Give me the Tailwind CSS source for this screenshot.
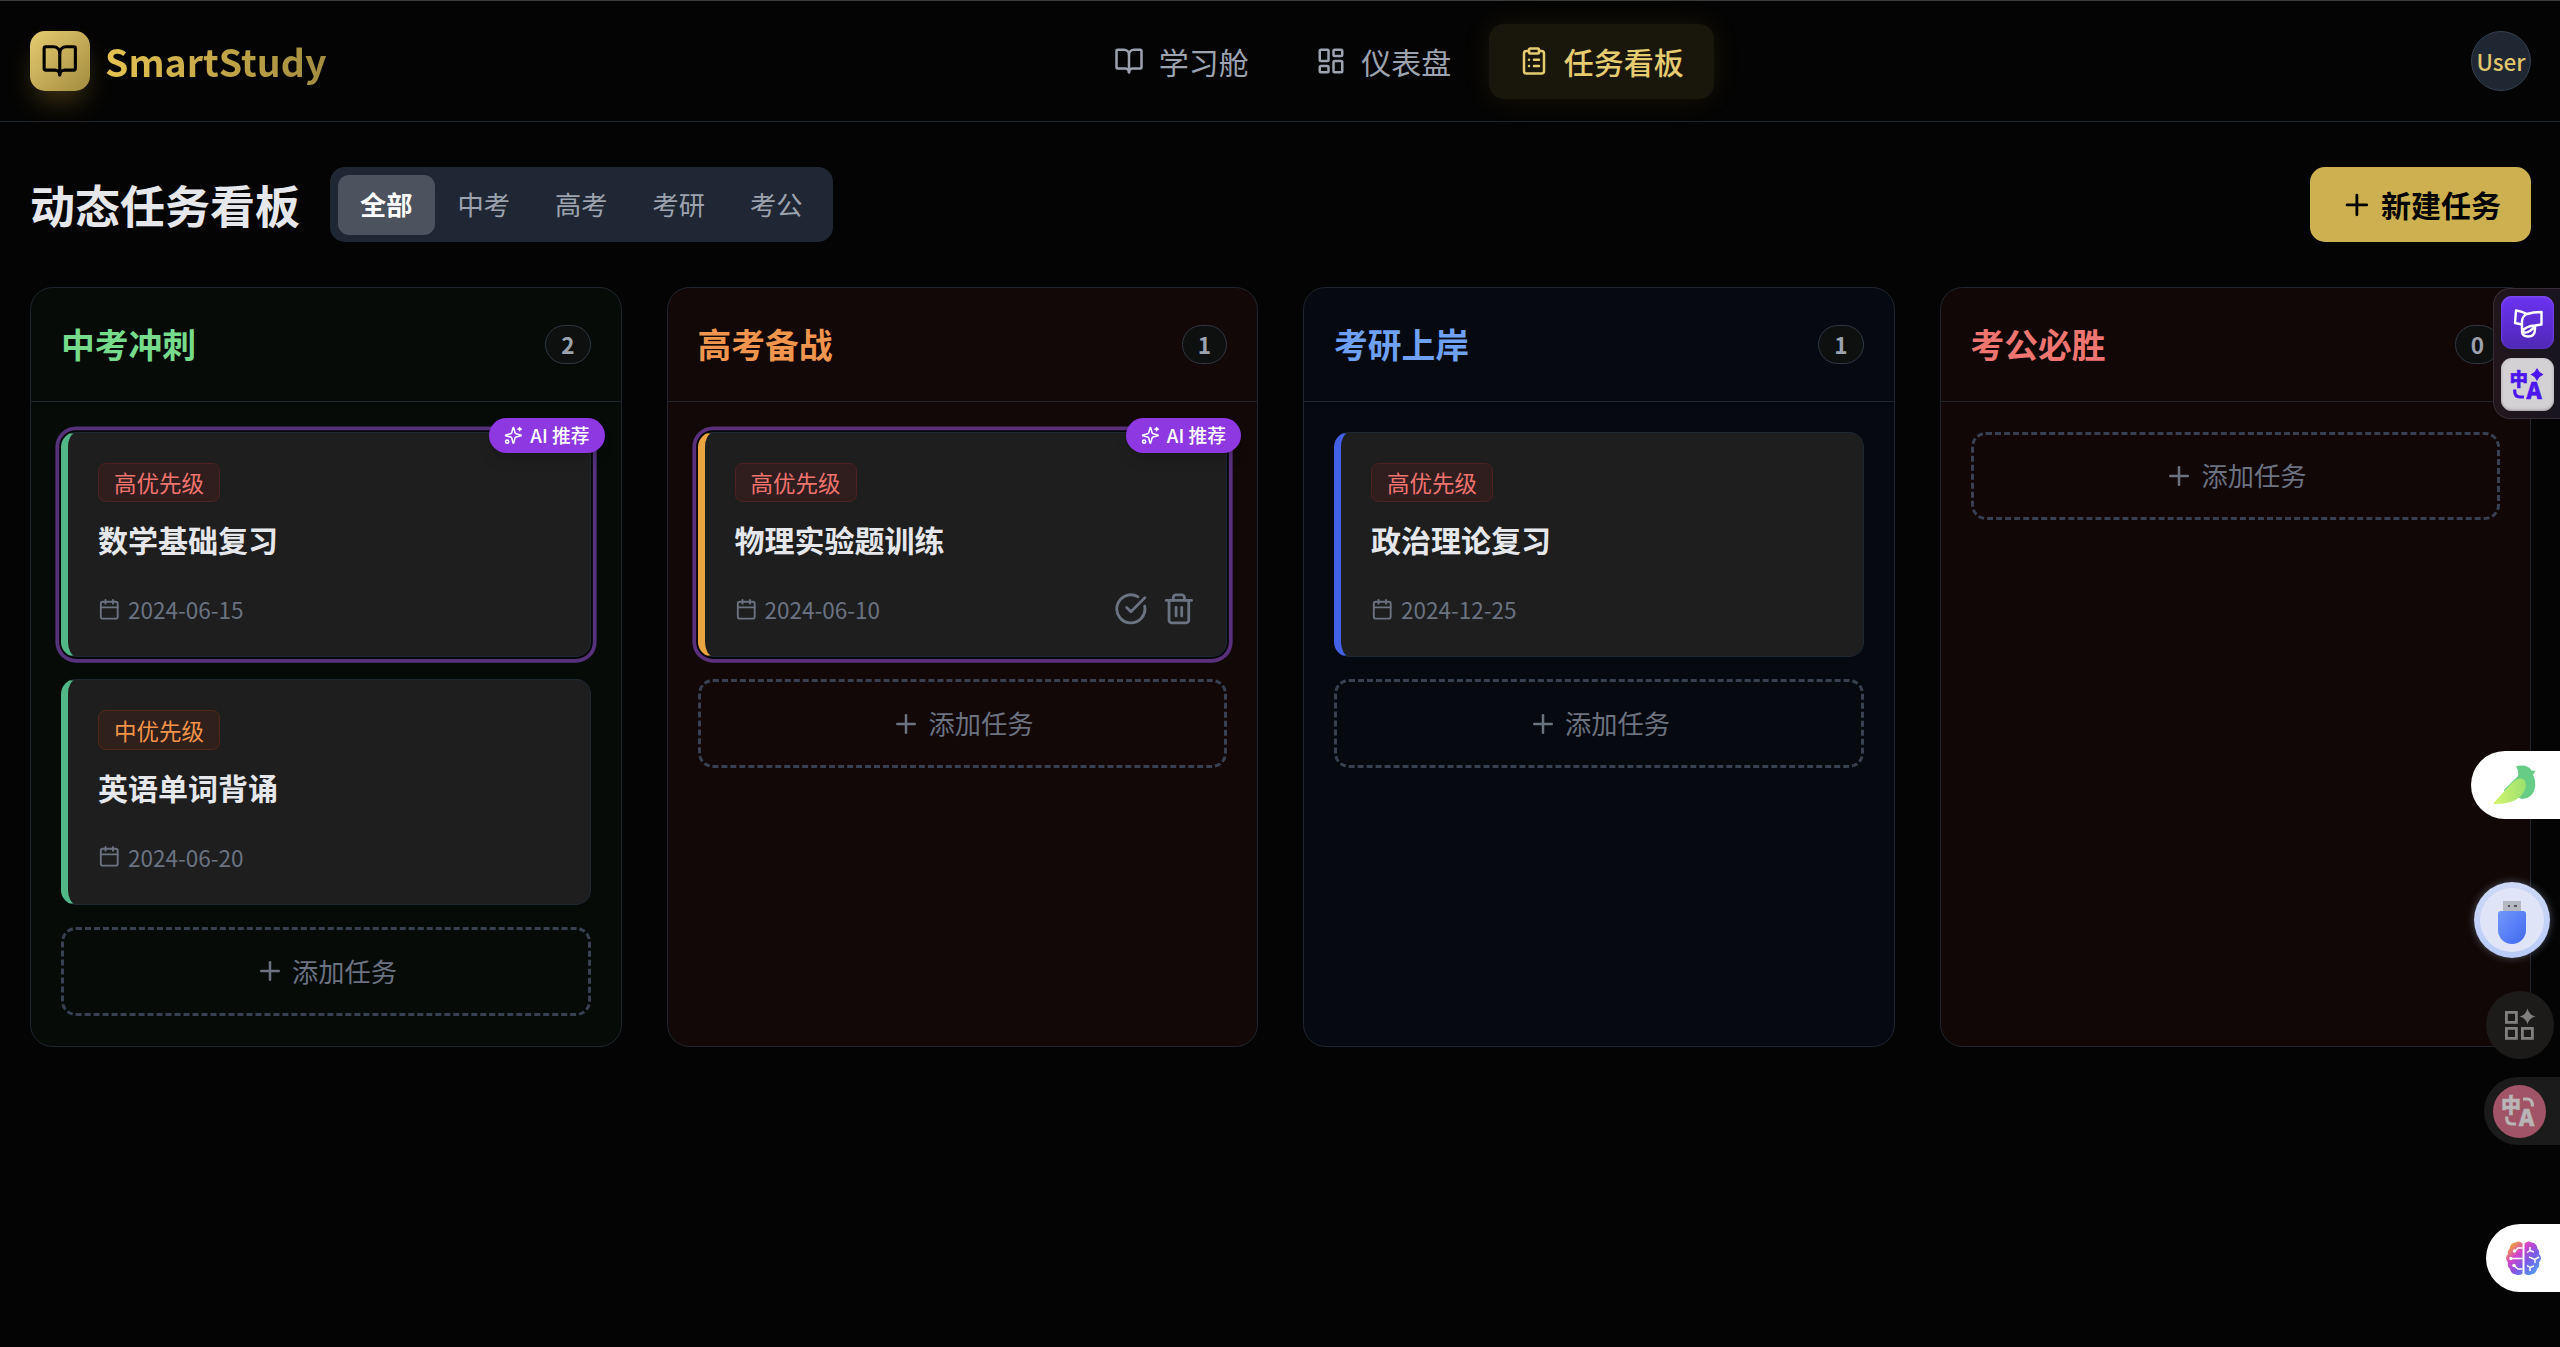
<!DOCTYPE html>
<html lang="zh-CN" class="text-[30px]">
<head>
    <meta charset="UTF-8">
    <meta name="viewport" content="width=device-width, initial-scale=1.0">
    <title>SmartStudy - 动态任务看板</title>
    <script src="https://cdn.jsdelivr.net/npm/@tailwindcss/browser@4"></script>
</head>
<body class="relative h-[1347px] overflow-hidden bg-[#040404] text-gray-200 font-['Noto_Sans_CJK_SC',sans-serif] border-t border-[#3c3c3c]">

    <!-- Icon sprite -->
    <svg class="hidden">
        <symbol id="book" viewBox="0 0 24 24"><path d="M12 7v14"/><path d="M3 18a1 1 0 0 1-1-1V4a1 1 0 0 1 1-1h5a4 4 0 0 1 4 4 4 4 0 0 1 4-4h5a1 1 0 0 1 1 1v13a1 1 0 0 1-1 1h-6a3 3 0 0 0-3 3 3 3 0 0 0-3-3z"/></symbol>
        <symbol id="dashboard" viewBox="0 0 24 24"><rect width="7" height="9" x="3" y="3" rx="1"/><rect width="7" height="5" x="14" y="3" rx="1"/><rect width="7" height="9" x="14" y="12" rx="1"/><rect width="7" height="5" x="3" y="16" rx="1"/></symbol>
        <symbol id="clipboard" viewBox="0 0 24 24"><rect width="8" height="4" x="8" y="2" rx="1"/><path d="M16 4h2a2 2 0 0 1 2 2v14a2 2 0 0 1-2 2H6a2 2 0 0 1-2-2V6a2 2 0 0 1 2-2h2"/><path d="M12 11h4"/><path d="M12 16h4"/><path d="M8 11h.01"/><path d="M8 16h.01"/></symbol>
        <symbol id="plus" viewBox="0 0 24 24"><path d="M5 12h14"/><path d="M12 5v14"/></symbol>
        <symbol id="calendar" viewBox="0 0 24 24"><path d="M8 2v4"/><path d="M16 2v4"/><rect width="18" height="18" x="3" y="4" rx="2"/><path d="M3 10h18"/></symbol>
        <symbol id="check" viewBox="0 0 24 24"><path d="M21.801 10A10 10 0 1 1 17 3.335"/><path d="m9 11 3 3L22 4"/></symbol>
        <symbol id="trash" viewBox="0 0 24 24"><path d="M3 6h18"/><path d="M19 6v14a2 2 0 0 1-2 2H7a2 2 0 0 1-2-2V6"/><path d="M8 6V4a2 2 0 0 1 2-2h4a2 2 0 0 1 2 2v2"/><path d="M10 11v6"/><path d="M14 11v6"/></symbol>
        <symbol id="sparkles" viewBox="0 0 24 24"><path d="M9.937 15.5A2 2 0 0 0 8.5 14.063l-6.135-1.582a.5.5 0 0 1 0-.962L8.5 9.936A2 2 0 0 0 9.937 8.5l1.582-6.135a.5.5 0 0 1 .963 0L14.063 8.5A2 2 0 0 0 15.5 9.937l6.135 1.581a.5.5 0 0 1 0 .964L15.5 14.063a2 2 0 0 0-1.437 1.437l-1.582 6.135a.5.5 0 0 1-.963 0z"/><path d="M20 2v4"/><path d="M22 4h-4"/><circle cx="4" cy="20" r="2"/></symbol>
    </svg>

    <!-- Header -->
    <header class="flex items-center justify-between pl-4 pr-[29px] py-3 border-b border-[#1e252e]">
        <div class="flex items-center gap-2">
            <div class="flex items-center justify-center size-8 rounded-lg bg-linear-to-br from-[#e6cc70] to-[#a38c40] text-black shadow-[0_15px_28px_-6px_rgba(212,175,55,0.3)]">
                <svg class="size-5 fill-none stroke-current stroke-2 [stroke-linecap:round] [stroke-linejoin:round]"><use href="#book"/></svg>
            </div>
            <h1 class="text-xl font-bold bg-linear-to-r from-[#e6c350] to-[#a38c40] bg-clip-text text-transparent">SmartStudy</h1>
        </div>

        <nav class="flex items-center gap-1">
            <a class="flex items-center gap-2 px-4 py-2 text-[#9ca3af]">
                <svg class="size-4 fill-none stroke-current stroke-2 [stroke-linecap:round] [stroke-linejoin:round]"><use href="#book"/></svg>
                <span>学习舱</span>
            </a>
            <a class="flex items-center gap-2 px-4 py-2 text-[#9ca3af]">
                <svg class="size-4 fill-none stroke-current stroke-2 [stroke-linecap:round] [stroke-linejoin:round]"><use href="#dashboard"/></svg>
                <span>仪表盘</span>
            </a>
            <a class="flex items-center gap-2 px-4 py-2 rounded-lg bg-[#19170c] text-[#e6cc70] font-medium shadow-[0_0_28px_rgba(212,175,55,0.1)]">
                <svg class="size-4 fill-none stroke-current stroke-2 [stroke-linecap:round] [stroke-linejoin:round]"><use href="#clipboard"/></svg>
                <span>任务看板</span>
            </a>
        </nav>

        <div class="flex items-center justify-center size-8 rounded-full bg-[#1f2733] border border-[#374151] text-xs font-medium text-[#e0c66c]">User</div>
    </header>

    <main class="pl-4 pr-[29px] py-6">
        <!-- Title and filters -->
        <div class="flex items-center justify-between mb-6">
            <div class="flex items-center gap-4">
                <h2 class="text-2xl font-bold">动态任务看板</h2>
                <div class="flex p-1 rounded-lg bg-[#202734] text-sm text-[#9ca3af]">
                    <button class="px-3 py-1.5 rounded-md bg-[#4c525e] text-white font-bold">全部</button>
                    <button class="px-3 py-1.5">中考</button>
                    <button class="px-3 py-1.5">高考</button>
                    <button class="px-3 py-1.5">考研</button>
                    <button class="px-3 py-1.5">考公</button>
                </div>
            </div>
            <button class="flex items-center gap-1 px-4 py-2 rounded-lg bg-[#cdb04f] text-black font-bold">
                <svg class="size-4.5 fill-none stroke-current stroke-2 [stroke-linecap:round] [stroke-linejoin:round]"><use href="#plus"/></svg>
                新建任务
            </button>
        </div>

        <!-- Board -->
        <div class="grid grid-cols-4 gap-6">

            <!-- 中考 -->
            <section class="rounded-xl border border-[#1f2630] bg-[#070b08]">
                <div class="flex items-center justify-between p-4 border-b border-[#1f2630]">
                    <h3 class="text-lg font-bold text-[#76db8b]">中考冲刺</h3>
                    <span class="px-2 py-0.5 rounded-full border border-[#303844] bg-[#0e0f0f] text-xs font-bold text-[#9ca3af]">2</span>
                </div>
                <div class="flex flex-col gap-3 p-4">
                    <div class="relative p-4 rounded-lg border border-[#1f2733] border-l-[7px] border-l-[#52b788] bg-[#1e1e1e] ring-[3.75px] ring-[#56317c] ring-offset-[1.875px] ring-offset-[#070709]">
                        <span class="absolute -top-2 -right-2 flex items-center gap-1 px-2 py-0.5 rounded-full bg-[#8d38e0] text-[18.75px]/[28px] font-medium text-white shadow-lg">
                            <svg class="size-2.5 fill-none stroke-current stroke-2 [stroke-linecap:round] [stroke-linejoin:round]"><use href="#sparkles"/></svg>
                            AI 推荐
                        </span>
                        <div class="flex mb-2"><span class="px-2 py-0.5 rounded-sm border border-[#4e2122] bg-[#301d1e] text-xs text-[#ee736f]">高优先级</span></div>
                        <h4 class="font-bold">数学基础复习</h4>
                        <div class="flex items-center justify-between h-4.5 mt-4 text-[#6b7280]">
                            <div class="flex items-center gap-1 text-xs">
                                <svg class="size-3 fill-none stroke-current stroke-2 [stroke-linecap:round] [stroke-linejoin:round]"><use href="#calendar"/></svg>
                                2024-06-15
                            </div>
                        </div>
                    </div>
                    <div class="p-4 rounded-lg border border-[#1f2733] border-l-[7px] border-l-[#52b788] bg-[#1e1e1e]">
                        <div class="flex mb-2"><span class="px-2 py-0.5 rounded-sm border border-[#53281a] bg-[#2f201b] text-xs text-[#f19348]">中优先级</span></div>
                        <h4 class="font-bold">英语单词背诵</h4>
                        <div class="flex items-center justify-between h-4.5 mt-4 text-[#6b7280]">
                            <div class="flex items-center gap-1 text-xs">
                                <svg class="size-3 fill-none stroke-current stroke-2 [stroke-linecap:round] [stroke-linejoin:round]"><use href="#calendar"/></svg>
                                2024-06-20
                            </div>
                        </div>
                    </div>
                    <button class="flex items-center justify-center gap-1 py-3 rounded-lg border-[3px] border-dashed border-[#374151] text-sm text-[#6b7280]">
                        <svg class="size-4 fill-none stroke-current stroke-2 [stroke-linecap:round] [stroke-linejoin:round]"><use href="#plus"/></svg>
                        添加任务
                    </button>
                </div>
            </section>

            <!-- 高考 -->
            <section class="rounded-xl border border-[#1f2630] bg-[#110807]">
                <div class="flex items-center justify-between p-4 border-b border-[#1f2630]">
                    <h3 class="text-lg font-bold text-[#f0954d]">高考备战</h3>
                    <span class="px-2 py-0.5 rounded-full border border-[#303844] bg-[#0e0f0f] text-xs font-bold text-[#9ca3af]">1</span>
                </div>
                <div class="flex flex-col gap-3 p-4">
                    <div class="relative p-4 rounded-lg border border-[#1f2733] border-l-[7px] border-l-[#e9a540] bg-[#1e1e1e] ring-[3.75px] ring-[#5a307d] ring-offset-[1.875px] ring-offset-[#070709]">
                        <span class="absolute -top-2 -right-2 flex items-center gap-1 px-2 py-0.5 rounded-full bg-[#8d38e0] text-[18.75px]/[28px] font-medium text-white shadow-lg">
                            <svg class="size-2.5 fill-none stroke-current stroke-2 [stroke-linecap:round] [stroke-linejoin:round]"><use href="#sparkles"/></svg>
                            AI 推荐
                        </span>
                        <div class="flex mb-2"><span class="px-2 py-0.5 rounded-sm border border-[#4e2122] bg-[#301d1e] text-xs text-[#ee736f]">高优先级</span></div>
                        <h4 class="font-bold">物理实验题训练</h4>
                        <div class="flex items-center justify-between h-4.5 mt-4 text-[#6b7280]">
                            <div class="flex items-center gap-1 text-xs">
                                <svg class="size-3 fill-none stroke-current stroke-2 [stroke-linecap:round] [stroke-linejoin:round]"><use href="#calendar"/></svg>
                                2024-06-10
                            </div>
                            <div class="flex gap-2">
                                <svg class="size-4.5 fill-none stroke-current stroke-2 [stroke-linecap:round] [stroke-linejoin:round]"><use href="#check"/></svg>
                                <svg class="size-4.5 fill-none stroke-current stroke-2 [stroke-linecap:round] [stroke-linejoin:round]"><use href="#trash"/></svg>
                            </div>
                        </div>
                    </div>
                    <button class="flex items-center justify-center gap-1 py-3 rounded-lg border-[3px] border-dashed border-[#374151] text-sm text-[#6b7280]">
                        <svg class="size-4 fill-none stroke-current stroke-2 [stroke-linecap:round] [stroke-linejoin:round]"><use href="#plus"/></svg>
                        添加任务
                    </button>
                </div>
            </section>

            <!-- 考研 -->
            <section class="rounded-xl border border-[#1f2630] bg-[#06090f]">
                <div class="flex items-center justify-between p-4 border-b border-[#1f2630]">
                    <h3 class="text-lg font-bold text-[#6ea0f4]">考研上岸</h3>
                    <span class="px-2 py-0.5 rounded-full border border-[#303844] bg-[#0e0f0f] text-xs font-bold text-[#9ca3af]">1</span>
                </div>
                <div class="flex flex-col gap-3 p-4">
                    <div class="p-4 rounded-lg border border-[#1f2733] border-l-[7px] border-l-[#4361e6] bg-[#1e1e1e]">
                        <div class="flex mb-2"><span class="px-2 py-0.5 rounded-sm border border-[#4e2122] bg-[#301d1e] text-xs text-[#ee736f]">高优先级</span></div>
                        <h4 class="font-bold">政治理论复习</h4>
                        <div class="flex items-center justify-between h-4.5 mt-4 text-[#6b7280]">
                            <div class="flex items-center gap-1 text-xs">
                                <svg class="size-3 fill-none stroke-current stroke-2 [stroke-linecap:round] [stroke-linejoin:round]"><use href="#calendar"/></svg>
                                2024-12-25
                            </div>
                        </div>
                    </div>
                    <button class="flex items-center justify-center gap-1 py-3 rounded-lg border-[3px] border-dashed border-[#374151] text-sm text-[#6b7280]">
                        <svg class="size-4 fill-none stroke-current stroke-2 [stroke-linecap:round] [stroke-linejoin:round]"><use href="#plus"/></svg>
                        添加任务
                    </button>
                </div>
            </section>

            <!-- 考公 -->
            <section class="rounded-xl border border-[#1f2630] bg-[#100706]">
                <div class="flex items-center justify-between p-4 border-b border-[#1f2630]">
                    <h3 class="text-lg font-bold text-[#ee7570]">考公必胜</h3>
                    <span class="px-2 py-0.5 rounded-full border border-[#303844] bg-[#0e0f0f] text-xs font-bold text-[#9ca3af]">0</span>
                </div>
                <div class="flex flex-col gap-3 p-4">
                    <button class="flex items-center justify-center gap-1 py-3 rounded-lg border-[3px] border-dashed border-[#374151] text-sm text-[#6b7280]">
                        <svg class="size-4 fill-none stroke-current stroke-2 [stroke-linecap:round] [stroke-linejoin:round]"><use href="#plus"/></svg>
                        添加任务
                    </button>
                </div>
            </section>
        </div>
    </main>

    <!-- Floating tools on the right edge -->
    <div class="absolute right-0 top-[287px] w-[67px] h-[131px] pl-[7px] pt-[7px] flex flex-col gap-[9px] rounded-l-[17px] border border-r-0 border-[#382d36] bg-linear-to-r from-[#21161c] to-[#18151e]">
        <div class="size-[53px] rounded-[11px] bg-linear-to-b from-[#6b32f2] to-[#4f28b6] shadow-[inset_0_1px_3px_#8656f5] flex items-center justify-center">
            <svg class="size-[32px] fill-none stroke-white stroke-[2.4] [stroke-linejoin:round]" viewBox="0 0 32 32">
                <path d="M10 17.500 3 16 4 3.500Q9 4 15 7"/>
                <path d="M15 7Q21 5 29.500 5V17.500L23 18.500Q14 19 10 24.500V14Q10.500 9 15 7z"/>
                <path d="M10 24Q10 29.500 16 29.500Q23 29.500 23 22V18.500M10.500 24.500Q13 27 18 24Q22 21 23 18.500"/>
            </svg>
        </div>
        <div class="size-[53px] rounded-[11px] bg-[#d3d1d4] shadow-[inset_0_-1px_3px_#9b999b]">
            <svg class="size-[53px] fill-[#4b16ee]" viewBox="0 0 53 53">
                <text class="stroke-[#4b16ee] stroke-[0.5]" x="8.500" y="27.500" font-size="18.500" font-weight="900">中</text>
                <text class="stroke-[#4b16ee] stroke-[0.5]" x="25.500" y="40.500" font-size="23" font-weight="900">A</text>
                <path d="M36 10 38.500 14 42.500 16.500 38.500 19 36 23 33.500 19 29.500 16.500 33.500 14z"/>
                <path class="fill-none stroke-[#4b16ee] stroke-[3.2]" d="M13.700 31.500V33Q13.700 39 19 39H23"/>
            </svg>
        </div>
    </div>

    <div class="absolute right-0 top-[750px] w-[89px] h-[68px] pl-[22px] flex items-center rounded-l-full bg-white">
        <svg class="w-[43px] h-[40px]" viewBox="0 0 43 40">
            <defs><linearGradient id="wing" x1="0" x2="1"><stop stop-color="#d3f56e"/><stop offset="1" stop-color="#9be06f"/></linearGradient></defs>
            <path fill="#67cd86" d="M23 1Q35 -1 38.500 5.500L42.500 6 40 9.500Q43 15 42 23Q39 34 29 34L12 27 11 25Q17 19 25 11Q26 6 23 1z"/>
            <path fill="url(#wing)" d="M1 37.500 18 19Q25 11 31 14.500Q36 21 28 31Q19 39.500 1 39z"/>
        </svg>
    </div>

    <div class="absolute left-[2474px] top-[881px] size-[76px] rounded-full bg-linear-to-b from-[#cdd9f7] to-[#b9cbf8] flex items-center justify-center shadow-[0_0_8px_rgba(195,210,248,0.35)]">
        <div class="size-[64px] rounded-full bg-[#dfe5f6] flex flex-col items-center pt-[13px]">
            <div class="w-[18px] h-[10px] bg-[#b4b8c3] flex items-center justify-center gap-[4px]">
                <span class="size-[2.5px] bg-[#555]"></span>
                <span class="size-[2.5px] bg-[#555]"></span>
            </div>
            <div class="w-[28px] h-[33px] rounded-t-[3px] rounded-b-[14px] bg-linear-to-br from-[#7396fd] to-[#4069ef]"></div>
        </div>
    </div>

    <div class="absolute left-[2486px] top-[990px] size-[68px] rounded-full bg-[#1c1b1a] flex items-center justify-center">
        <svg class="size-[34px] fill-none stroke-[#817f7d] stroke-[2.8]" viewBox="0 0 34 34">
            <rect x="3.400" y="4.400" width="10" height="10"/>
            <rect x="3.400" y="20.400" width="10" height="10"/>
            <rect x="19.400" y="20.400" width="10" height="10"/>
            <path class="fill-[#817f7d] stroke-none" d="M24.500 0.500Q26 7 32.500 8.500Q26 10 24.500 16.500Q23 10 16.500 8.500Q23 7 24.500 0.500z"/>
        </svg>
    </div>

    <div class="absolute right-0 top-[1076px] w-[76px] h-[68px] pl-[9px] flex items-center rounded-l-full bg-[#1b1b1b]">
        <svg class="size-[53px] rounded-full bg-[#a15467] fill-[#b9b5b6]" viewBox="0 0 53 53">
            <text class="stroke-[#b9b5b6] stroke-[0.5]" x="8" y="28" font-size="20" font-weight="900">中</text>
            <text class="stroke-[#b9b5b6] stroke-[0.5]" x="26" y="40.500" font-size="23" font-weight="900">A</text>
            <path class="fill-none stroke-[#b9b5b6] stroke-[3.2]" d="M30 14H34Q39.500 14 39.500 21.500M13.700 31.500V33Q13.700 39 19 39H23"/>
        </svg>
    </div>

    <div class="absolute right-0 top-[1223px] w-[74px] h-[68px] pl-[19px] flex items-center rounded-l-full bg-white">
        <svg class="size-[37px]" viewBox="0 0 37 37">
            <defs><linearGradient id="brain" x1="0" y1="0" x2="1" y2="1"><stop stop-color="#f2a13d"/><stop offset=".12" stop-color="#f2a13d"/><stop offset=".35" stop-color="#d444c9"/><stop offset=".6" stop-color="#7b5be8"/><stop offset="1" stop-color="#43b2f5"/></linearGradient></defs>
            <path fill="url(#brain)" d="M17.500 3.500Q14 0 10.500 2.500Q5 3 4.500 9Q2 11 3 14Q-1 18 3 22.500Q2 27 5 29Q6 34 11 34.500Q15 36 17.500 33.500zM19.500 3.500Q23 0 26.500 2.500Q32 3 32.500 9Q35 11 34 14Q38 18 34 22.500Q35 27 32 29Q31 34 26 34.500Q22 36 19.500 33.500z"/>
            <path class="fill-none stroke-white stroke-[1.500]" d="M17.500 8H13L10 11M17.500 18.500H6M17.500 29H13L9 25.500M25 7V10.500L22 12.500M25 10.500 29 12M24 17 30 19.500 34 17M30 19.500V23M25 31V27.500L22 25.500M25 27.500 29 26"/>
            <g class="fill-white"><circle cx="9.500" cy="11" r="1.700"/><circle cx="6" cy="18.500" r="1.700"/><circle cx="9" cy="25.500" r="1.700"/></g>
        </svg>
    </div>

</body>
</html>
